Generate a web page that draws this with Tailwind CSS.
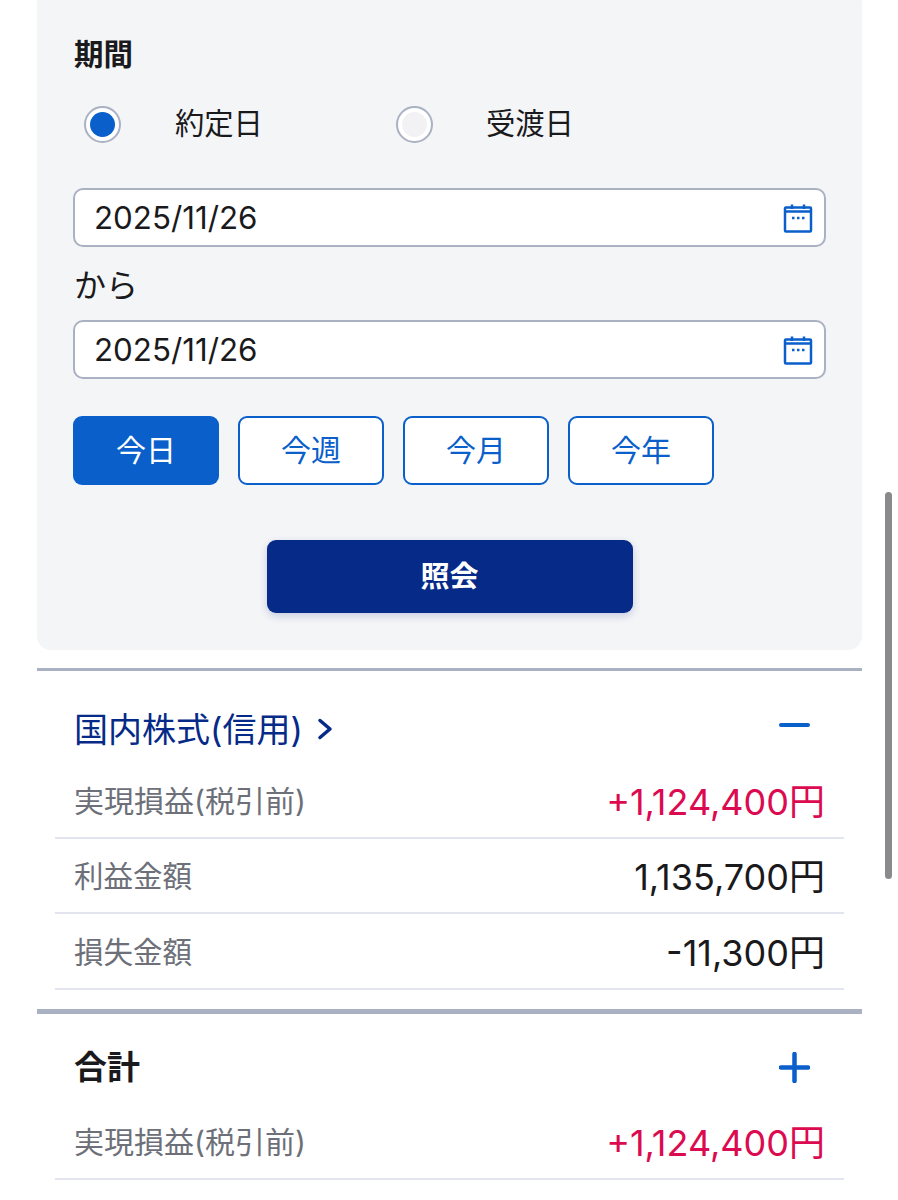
<!DOCTYPE html>
<html lang="ja">
<head>
    <meta charset="UTF-8">
    <title>実現損益</title>
    <script src="https://cdn.jsdelivr.net/npm/@tailwindcss/browser@4"></script>
</head>
<body class="bg-white h-[1200px] overflow-hidden relative font-['Inter','Noto_Sans_CJK_JP',sans-serif] text-[#1a1a1c]">
    <div class="ml-[37px] w-[825px]">
        <!-- search panel -->
        <section class="bg-[#f4f5f7] rounded-[14px] h-[660px] -mt-[10px] px-[36px] pt-[45px]">
            <h2 class="text-[29.5px] leading-[38px] font-bold pl-[1px]">期間</h2>
            <div class="flex items-center h-[40px] mt-[31px] pl-[11px] text-[29.3px]">
                <span class="w-[37px] h-[37px] rounded-full border-2 border-[#a9b1c2] bg-white flex items-center justify-center">
                    <span class="w-[25px] h-[25px] rounded-full bg-[#0a5fcb]"></span>
                </span>
                <span class="ml-[54px] w-[221px]">約定日</span>
                <span class="w-[37px] h-[37px] rounded-full border-2 border-[#a9b1c2] bg-white flex items-center justify-center">
                    <span class="w-[25px] h-[25px] rounded-full bg-[#f2f2f4]"></span>
                </span>
                <span class="ml-[53px]">受渡日</span>
            </div>
            <div class="mt-[44px] h-[59px] w-[753px] bg-white border-2 border-[#a9b1c2] rounded-[10px] flex items-center justify-between pl-[19px] pr-[11px] text-[31.3px]">
                <span class="pt-[2px]">2025/11/26</span>
                <svg class="w-[30px] h-[30px]" viewBox="0 0 30 30" fill="none" stroke="#0a5fcb" stroke-width="2.5">
                    <rect x="2" y="4.5" width="26" height="24" rx="1"/>
                    <path d="M2 8.5H28M9 1.5V6M21 1.5V6"/>
                    <path d="M9 15h2.5M14 15h2.5M19 15h2.5" stroke-width="2.5"/>
                </svg>
            </div>
            <p class="text-[32px] leading-[48px] mt-[15px] mb-[10px] pl-[1px]">から</p>
            <div class="h-[59px] w-[753px] bg-white border-2 border-[#a9b1c2] rounded-[10px] flex items-center justify-between pl-[19px] pr-[11px] text-[31.3px]">
                <span class="pt-[2px]">2025/11/26</span>
                <svg class="w-[30px] h-[30px]" viewBox="0 0 30 30" fill="none" stroke="#0a5fcb" stroke-width="2.5">
                    <rect x="2" y="4.5" width="26" height="24" rx="1"/>
                    <path d="M2 8.5H28M9 1.5V6M21 1.5V6"/>
                    <path d="M9 15h2.5M14 15h2.5M19 15h2.5" stroke-width="2.5"/>
                </svg>
            </div>
            <div class="flex gap-[19px] mt-[37px] text-[30px]">
                <button class="w-[146px] h-[69px] rounded-[9px] bg-[#0a5fcb] text-white">今日</button>
                <button class="w-[146px] h-[69px] rounded-[9px] bg-white border-2 border-[#0a5fcb] text-[#0a5fcb]">今週</button>
                <button class="w-[146px] h-[69px] rounded-[9px] bg-white border-2 border-[#0a5fcb] text-[#0a5fcb]">今月</button>
                <button class="w-[146px] h-[69px] rounded-[9px] bg-white border-2 border-[#0a5fcb] text-[#0a5fcb]">今年</button>
            </div>
            <div class="flex justify-center mt-[55px]">
                <button class="w-[366px] h-[73px] rounded-[9px] bg-[#062a87] text-white text-[29px] font-bold shadow-[0_3px_8px_rgba(6,42,135,0.2)]">照会</button>
            </div>
        </section>

        <!-- 国内株式(信用) -->
        <section class="mt-[18px] border-t-[3px] border-[#a9b1c2] px-[18px]">
            <div class="h-[114px] flex items-center justify-between pl-[19px] pr-[34px] pt-[2px]">
                <div class="flex items-center text-[#062a87] text-[34px]">
                    <span>国内株式(信用)</span>
                    <svg class="ml-[14px] w-[16px] h-[24px]" viewBox="0 0 16 24" fill="none" stroke="#062a87" stroke-width="3.5" stroke-linecap="round" stroke-linejoin="round"><path d="M3 3.5L13 12L3 20.5"/></svg>
                </div>
                <span class="w-[31px] h-[4px] rounded-full bg-[#0a5fcb] mb-[8px]"></span>
            </div>
            <div class="h-[55px] -mt-[1px] border-b-2 border-[#e3e5ee] flex items-start justify-between pl-[19px] pr-[19px]">
                <span class="text-[30px] leading-[34px] text-[#6d7079]">実現損益(税引前)</span>
                <span class="text-[36px] leading-[37px] text-[#dc0a50]">+1,124,400円</span>
            </div>
            <div class="h-[75px] pt-[19px] border-b-2 border-[#e3e5ee] flex items-start justify-between pl-[19px] pr-[19px]">
                <span class="text-[29.5px] leading-[36px] text-[#6d7079]">利益金額</span>
                <span class="text-[36px] leading-[38px]">1,135,700円</span>
            </div>
            <div class="h-[76px] pt-[19px] border-b-2 border-[#e3e5ee] flex items-start justify-between pl-[19px] pr-[19px]">
                <span class="text-[29.5px] leading-[38px] text-[#6d7079]">損失金額</span>
                <span class="text-[36px] leading-[40px]">-11,300円</span>
            </div>
        </section>

        <!-- 合計 -->
        <section class="mt-[19px] border-t-[5px] border-[#a9b1c2] px-[18px]">
            <div class="h-[106px] flex items-center justify-between pl-[19px] pr-[34px]">
                <span class="text-[33px] font-bold mt-[2px]">合計</span>
                <svg class="w-[31px] h-[31px]" viewBox="0 0 31 31" stroke="#0a5fcb" stroke-width="4.5" stroke-linecap="round"><path d="M2 15.5H29M15.5 2V29"/></svg>
            </div>
            <div class="h-[60px] pt-[3px] border-b-2 border-[#e3e5ee] flex items-start justify-between pl-[19px] pr-[19px]">
                <span class="text-[30px] leading-[38px] text-[#6d7079]">実現損益(税引前)</span>
                <span class="text-[36px] leading-[40px] text-[#dc0a50]">+1,124,400円</span>
            </div>
        </section>
    </div>

    <!-- scrollbar -->
    <div class="absolute left-[885px] top-[492px] w-[7px] h-[387px] rounded-full bg-[#8a8a8c]"></div>
</body>
</html>
